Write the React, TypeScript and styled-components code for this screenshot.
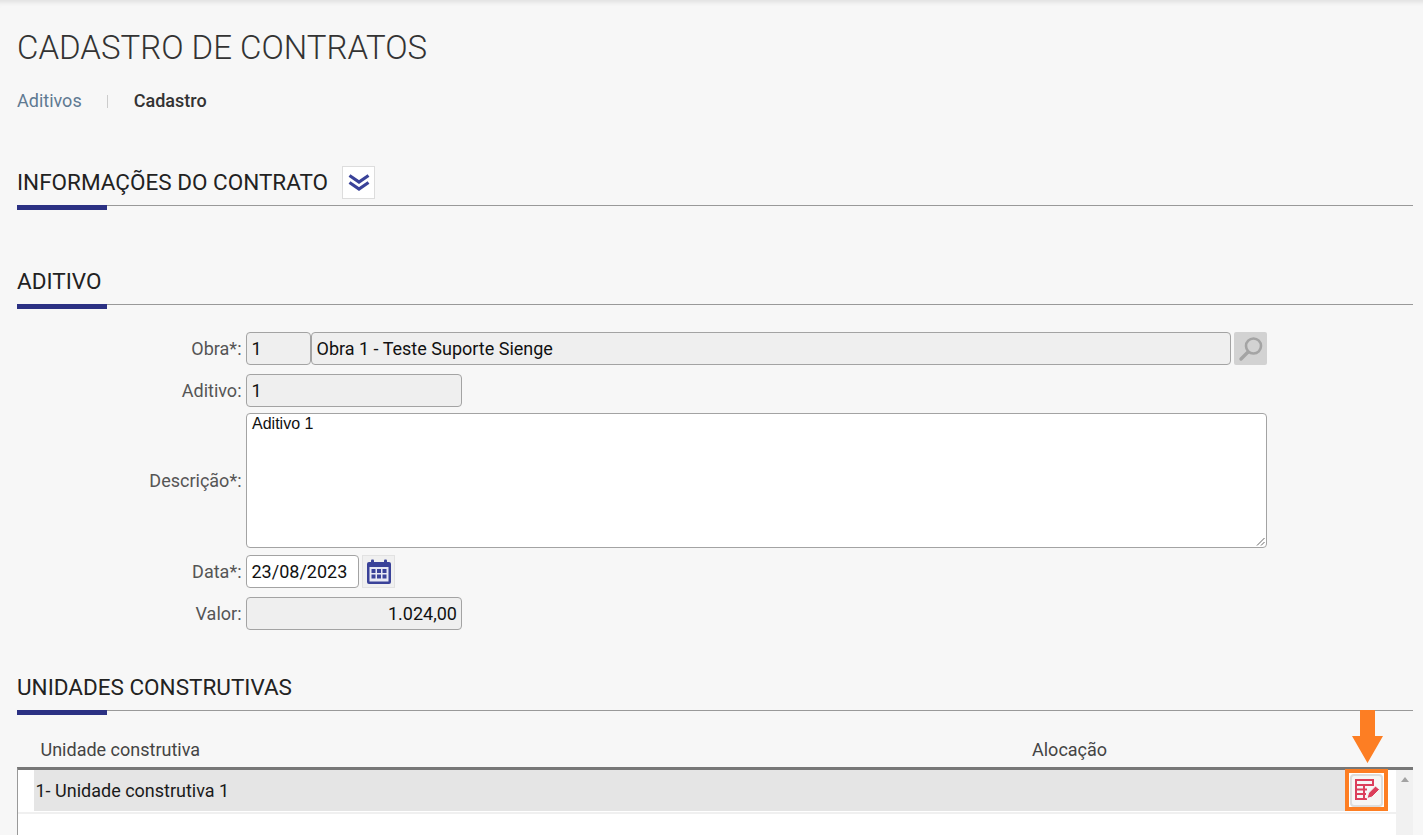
import { createGlobalStyle, styled } from "styled-components";

const GlobalStyle = createGlobalStyle`
    html, body {
        margin: 0;
        height: 835px;
        overflow: hidden;
        background: #f7f7f7;
        font-family: Roboto, "Liberation Sans", sans-serif;
    }
`;

const Page = styled.div`
    position: relative;
    height: 835px;
    padding: 0 10px 0 17px;
    box-sizing: border-box;
    overflow: hidden;
    box-shadow: inset 0 6px 5px -4px rgba(0, 0, 0, 0.1);
`;

const Title = styled.h1`
    margin: 0;
    padding-top: 30px;
    height: 36px;
    line-height: 36px;
    font-size: 33px;
    font-weight: 300;
    color: #333;
`;

const Breadcrumb = styled.div`
    display: flex;
    align-items: center;
    height: 20px;
    margin-top: 25px;
    font-size: 18px;
    line-height: 20px;
`;

const Crumb = styled.span<{ $active?: boolean }>`
    color: ${(p) => (p.$active ? "#333" : "#5f7a92")};
    font-weight: ${(p) => (p.$active ? 500 : 400)};
`;

const CrumbDivider = styled.span`
    width: 1px;
    height: 13px;
    margin: 0 26px 0 25px;
    background: #ccc;
`;

const Section = styled.section<{ $top: number }>`
    position: relative;
    display: flex;
    align-items: center;
    gap: 14px;
    height: 33px;
    margin-top: ${(p) => p.$top}px;
    padding-bottom: 6px;
    border-bottom: 1px solid #999;
    &::after {
        content: "";
        position: absolute;
        left: 0;
        bottom: -5px;
        width: 90px;
        height: 5px;
        background: #2b3183;
    }
`;

const SectionTitle = styled.h2`
    margin: 0 0 1px;
    font-size: 22.5px;
    font-weight: 400;
    color: #222;
`;

const ToggleButton = styled.span`
    display: flex;
    align-items: center;
    justify-content: center;
    width: 31px;
    height: 31px;
    border: 1px solid #ddd;
    background: #fff;
`;

const Form = styled.div`
    display: grid;
    grid-template-columns: 224.5px 1021px;
    column-gap: 4.5px;
    align-items: center;
    margin-top: 27px;
`;

const Label = styled.label<{ $row: number; $gap?: number }>`
    grid-column: 1;
    grid-row: ${(p) => p.$row};
    margin-bottom: ${(p) => p.$gap ?? 0}px;
    text-align: right;
    font-size: 18px;
    color: #555;
`;

const Row = styled.div<{ $row: number; $gap: number }>`
    grid-column: 2;
    grid-row: ${(p) => p.$row};
    display: flex;
    align-items: center;
    margin-bottom: ${(p) => p.$gap}px;
`;

const Field = styled.div<{ $width: string; $readOnly?: boolean; $right?: boolean }>`
    flex: none;
    width: ${(p) => p.$width};
    height: 33px;
    line-height: 31px;
    padding: 0 4px 0 4.5px;
    box-sizing: border-box;
    border: 1px solid #a3a3a3;
    border-radius: 4px;
    background: ${(p) => (p.$readOnly ? "#efefef" : "#fff")};
    text-align: ${(p) => (p.$right ? "right" : "left")};
    font-size: 18px;
    color: #111;
`;

const TextArea = styled.div`
    position: relative;
    width: 1021px;
    height: 135px;
    padding: 0 5px;
    box-sizing: border-box;
    border: 1px solid #a3a3a3;
    border-radius: 4px;
    background: #fff;
    font-family: "Liberation Sans", Arial, sans-serif;
    font-size: 16px;
    line-height: 19px;
    color: #111;
`;

const ResizeGrip = styled.svg`
    position: absolute;
    right: 1px;
    bottom: 1px;
`;

const SearchButton = styled.span`
    display: flex;
    align-items: center;
    justify-content: center;
    width: 33px;
    height: 33px;
    margin-left: 3px;
    border-radius: 2px;
    background: #d2d2d2;
`;

const CalendarButton = styled.span`
    display: flex;
    align-items: center;
    justify-content: center;
    width: 33px;
    height: 33px;
    margin-left: 3px;
    border: 1px solid #e2e2e2;
    box-sizing: border-box;
    background: #f0f0f0;
`;

const TableHead = styled.div`
    display: grid;
    grid-template-columns: 991.5px 1fr;
    height: 56px;
    padding: 29px 0 0 23.5px;
    box-sizing: border-box;
    font-size: 18px;
    line-height: 20px;
    color: #444;
`;

const TableBody = styled.div`
    position: relative;
    height: 68px;
    border-top: 3px solid #777;
    border-left: 1px solid #999;
    background: #fff;
`;

const TableRow = styled.div`
    display: flex;
    align-items: center;
    height: 41px;
    margin-left: 16px;
    margin-right: 67px;
    padding-left: 1.5px;
    background: #e5e5e5;
    font-size: 18px;
    color: #1a1a1a;
`;

const RowRule = styled.div`
    height: 2px;
    margin-top: 1px;
    margin-right: 17px;
    background: #f0f0f0;
`;

const ScrollBar = styled.div`
    position: absolute;
    top: 0;
    right: 0;
    bottom: 0;
    width: 17px;
    background: #f1f1f1;
    &::before {
        content: "";
        position: absolute;
        top: 7px;
        left: 5px;
        border: 4px solid transparent;
        border-top: 0;
        border-bottom: 5px solid #a3a3a3;
    }
`;

const HighlightBox = styled.div`
    position: absolute;
    left: 1345px;
    top: 769px;
    width: 43px;
    height: 42px;
    box-sizing: border-box;
    border: 4px solid #fd7e23;
    display: flex;
    align-items: center;
    justify-content: center;
    background: #fff;
`;

const EditButton = styled.span`
    display: flex;
    align-items: center;
    justify-content: center;
    width: 33px;
    height: 33px;
    box-sizing: border-box;
    border: 2px solid #ddd;
    border-radius: 4px;
    background: #f6f6f6;
`;

const Arrow = styled.svg`
    position: absolute;
    left: 1352px;
    top: 710px;
`;

export default function App() {
    return (
        <>
            <GlobalStyle />
            <Page>
                <Title>CADASTRO DE CONTRATOS</Title>
                <Breadcrumb>
                    <Crumb>Aditivos</Crumb>
                    <CrumbDivider />
                    <Crumb $active>Cadastro</Crumb>
                </Breadcrumb>
                <Section $top={55}>
                    <SectionTitle>INFORMAÇÕES DO CONTRATO</SectionTitle>
                    <ToggleButton>
                        <svg width="22" height="20" viewBox="0 0 22 20" fill="none" stroke="#3a4299" strokeWidth="3.2">
                            <path d="M1.5 2.5 11 9l9.5-6.5" />
                            <path d="M1.5 9.5 11 16l9.5-6.5" />
                        </svg>
                    </ToggleButton>
                </Section>
                <Section $top={59}>
                    <SectionTitle>ADITIVO</SectionTitle>
                </Section>
                <Form>
                    <Label $row={1} $gap={9}>Obra*:</Label>
                    <Row $row={1} $gap={9}>
                        <Field $width="65px" $readOnly>1</Field>
                        <Field $width="920px" $readOnly>Obra 1 - Teste Suporte Sienge</Field>
                        <SearchButton>
                            <svg width="28" height="28" viewBox="0 0 28 28" fill="none" stroke="#a4a4a4" strokeWidth="2.6">
                                <circle cx="16.5" cy="11" r="7.5" />
                                <path d="M11 17 4 24" strokeWidth="3.4" strokeLinecap="round" />
                            </svg>
                        </SearchButton>
                    </Row>
                    <Label $row={2} $gap={6}>Aditivo:</Label>
                    <Row $row={2} $gap={6}>
                        <Field $width="216px" $readOnly>1</Field>
                    </Row>
                    <Label $row={3} $gap={7}>Descrição*:</Label>
                    <Row $row={3} $gap={7}>
                        <TextArea>
                            Aditivo 1
                            <ResizeGrip width="9" height="9" viewBox="0 0 9 9" stroke="#666" fill="none">
                                <path d="M1 8.5 8.5 1M5 8.5 8.5 5" />
                            </ResizeGrip>
                        </TextArea>
                    </Row>
                    <Label $row={4} $gap={9}>Data*:</Label>
                    <Row $row={4} $gap={9}>
                        <Field $width="113px">23/08/2023</Field>
                        <CalendarButton>
                            <svg width="26" height="26" viewBox="0 0 26 26">
                                <rect x="1" y="3" width="24" height="22" rx="2" fill="#3a4299" />
                                <rect x="5" y="0.5" width="3" height="5" rx="1" fill="#3a4299" />
                                <rect x="18" y="0.5" width="3" height="5" rx="1" fill="#3a4299" />
                                <rect x="3.5" y="8" width="19" height="14.5" fill="#e8e9f4" />
                                {[5.5, 11, 16.5].map((x) =>
                                    [10, 15.5].map((y) => (
                                        <rect key={`${x}-${y}`} x={x} y={y} width="4" height="4" fill="#3a4299" />
                                    ))
                                )}
                            </svg>
                        </CalendarButton>
                    </Row>
                    <Label $row={5}>Valor:</Label>
                    <Row $row={5} $gap={0}>
                        <Field $width="216px" $readOnly $right>1.024,00</Field>
                    </Row>
                </Form>
                <Section $top={41}>
                    <SectionTitle>UNIDADES CONSTRUTIVAS</SectionTitle>
                </Section>
                <TableHead>
                    <span>Unidade construtiva</span>
                    <span>Alocação</span>
                </TableHead>
                <TableBody>
                    <TableRow>1- Unidade construtiva 1</TableRow>
                    <RowRule />
                    <ScrollBar />
                </TableBody>
                <Arrow width="32" height="54" viewBox="0 0 32 54" fill="#fd7e23">
                    <path d="M8 0h15v26h8L15.5 53 0 26h8z" />
                </Arrow>
                <HighlightBox>
                    <EditButton>
                        <svg width="26" height="24" viewBox="0 0 26 24" fill="none" stroke="#dc3f5c" strokeWidth="2">
                            <path d="M19 8V2H2v19h11" />
                            <path d="M2 7h17M2 11.5h11M2 16h10M10 7v14" />
                            <path d="m13 20.5 1.5-5.5 7-7 4 3.5-7.5 7.500z" fill="#dc3f5c" stroke="#f6f6f6" strokeWidth="1" />
                        </svg>
                    </EditButton>
                </HighlightBox>
            </Page>
        </>
    );
}
